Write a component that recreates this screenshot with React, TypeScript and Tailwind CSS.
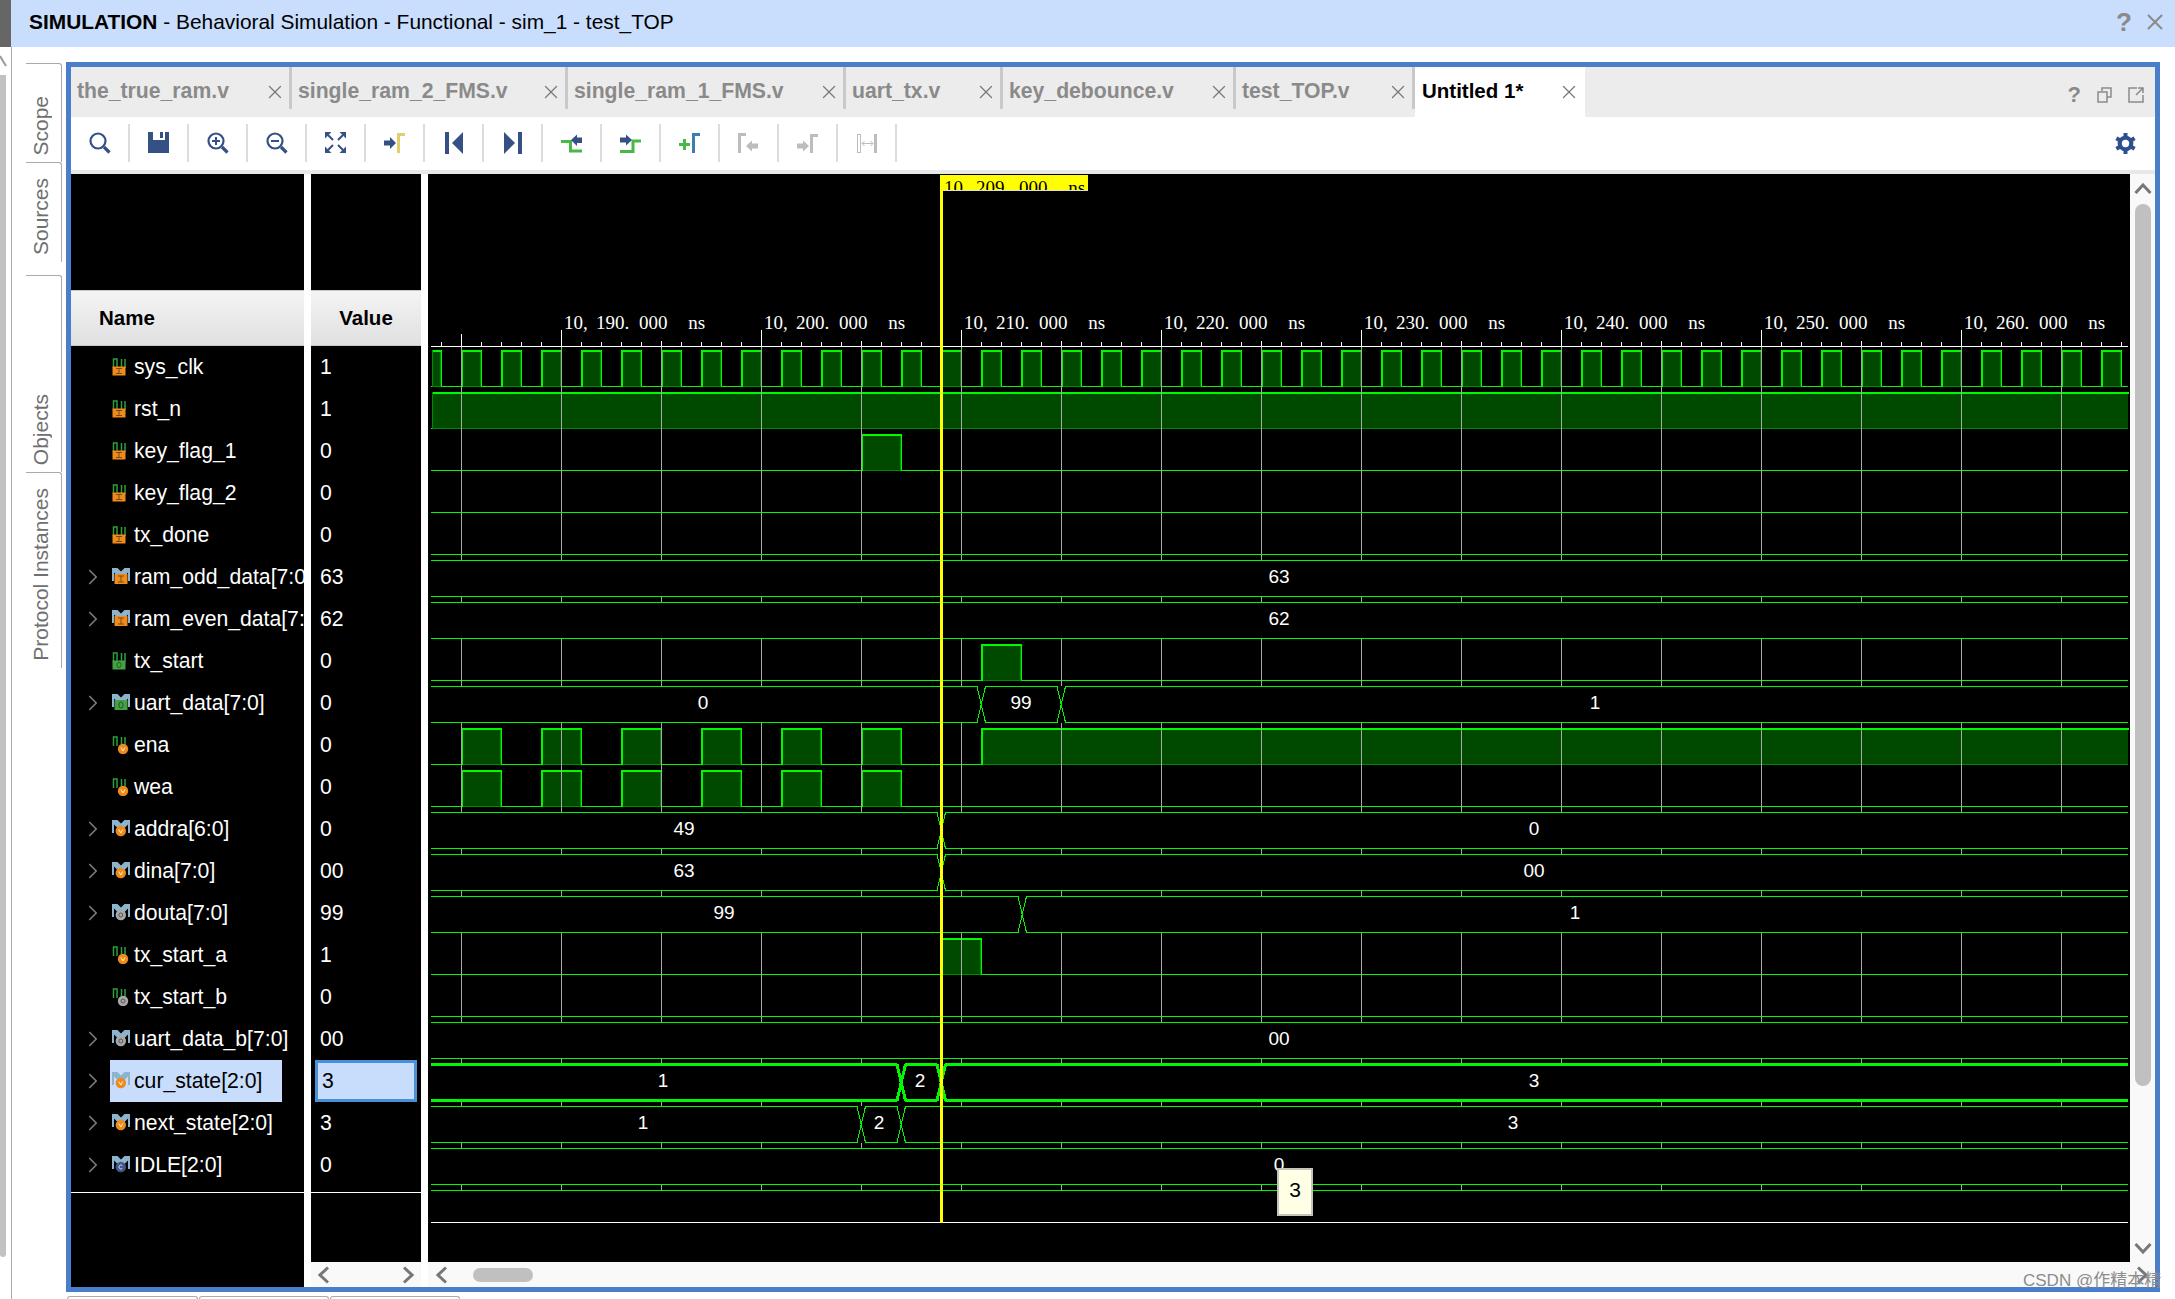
import { ChevronRight, X } from "lucide-react";
import type { ReactNode } from "react";

type Badge = "in" | "out" | "wire" | "gray" | "const";

const SIGNALS: { name: string; value: string; bus?: boolean; badge: Badge; selected?: boolean }[] = [
  { name: "sys_clk", value: "1", badge: "in" },
  { name: "rst_n", value: "1", badge: "in" },
  { name: "key_flag_1", value: "0", badge: "in" },
  { name: "key_flag_2", value: "0", badge: "in" },
  { name: "tx_done", value: "0", badge: "in" },
  { name: "ram_odd_data[7:0]", value: "63", bus: true, badge: "in" },
  { name: "ram_even_data[7:0]", value: "62", bus: true, badge: "in" },
  { name: "tx_start", value: "0", badge: "out" },
  { name: "uart_data[7:0]", value: "0", bus: true, badge: "out" },
  { name: "ena", value: "0", badge: "wire" },
  { name: "wea", value: "0", badge: "wire" },
  { name: "addra[6:0]", value: "0", bus: true, badge: "wire" },
  { name: "dina[7:0]", value: "00", bus: true, badge: "wire" },
  { name: "douta[7:0]", value: "99", bus: true, badge: "gray" },
  { name: "tx_start_a", value: "1", badge: "wire" },
  { name: "tx_start_b", value: "0", badge: "gray" },
  { name: "uart_data_b[7:0]", value: "00", bus: true, badge: "gray" },
  { name: "cur_state[2:0]", value: "3", bus: true, badge: "wire", selected: true },
  { name: "next_state[2:0]", value: "3", bus: true, badge: "wire" },
  { name: "IDLE[2:0]", value: "0", bus: true, badge: "const" },
];

const TABS = [
  { label: "the_true_ram.v", width: 221 },
  { label: "single_ram_2_FMS.v", width: 276 },
  { label: "single_ram_1_FMS.v", width: 278 },
  { label: "uart_tx.v", width: 157 },
  { label: "key_debounce.v", width: 233 },
  { label: "test_TOP.v", width: 179 },
];

const WAVE_START = 431;
const WAVE_END = 2128;
const GREEN = "#00f800";
const FILL = "#004a00";
const EDGE = "#008a00";

const top = (row: number) => 350 + 42 * row;

const clockHighs: [number, number][] = [[432, 441]];
for (let x = 461; x < WAVE_END; x += 40) clockHighs.push([x, x + 20]);

const enaHighs: [number, number][] = [];
for (let x = 461; x <= 861; x += 80) enaHighs.push([x, x + 40]);

const BITS: { row: number; highs: [number, number][] }[] = [
  { row: 0, highs: clockHighs },
  { row: 1, highs: [[432, WAVE_END]] },
  { row: 2, highs: [[861, 901]] },
  { row: 3, highs: [] },
  { row: 4, highs: [] },
  { row: 7, highs: [[981, 1021]] },
  { row: 9, highs: [...enaHighs, [981, WAVE_END]] },
  { row: 10, highs: enaHighs },
  { row: 14, highs: [[941, 981]] },
  { row: 15, highs: [] },
];

const BUSES: { row: number; edges: number[]; labels: [string, number][]; thick?: boolean }[] = [
  { row: 5, edges: [], labels: [["63", 1279]] },
  { row: 6, edges: [], labels: [["62", 1279]] },
  { row: 8, edges: [981, 1061], labels: [["0", 703], ["99", 1021], ["1", 1595]] },
  { row: 11, edges: [941], labels: [["49", 684], ["0", 1534]] },
  { row: 12, edges: [941], labels: [["63", 684], ["00", 1534]] },
  { row: 13, edges: [1022], labels: [["99", 724], ["1", 1575]] },
  { row: 16, edges: [], labels: [["00", 1279]] },
  { row: 17, edges: [901, 941], labels: [["1", 663], ["2", 920], ["3", 1534]], thick: true },
  { row: 18, edges: [861, 901], labels: [["1", 643], ["2", 879], ["3", 1513]] },
  { row: 19, edges: [], labels: [["0", 1279]] },
];

const MAJOR: number[] = [];
for (let x = 461; x < WAVE_END; x += 100) MAJOR.push(x);

const TICKS: number[] = [];
for (let x = 441; x < WAVE_END; x += 20) TICKS.push(x);

const RULER = ["190", "200", "210", "220", "230", "240", "250", "260"];

function tickTop(x: number) {
  if (x === 461) return 334;
  if ((x - 561) % 200 === 0) return 330;
  if ((x - 661) % 200 === 0) return 341;
  return 342;
}

function BitWave({ row, highs }: { row: number; highs: [number, number][] }) {
  const y = top(row);
  const lows: [number, number][] = [];
  let cursor = WAVE_START;
  for (const [a, b] of highs) {
    if (a > cursor) lows.push([cursor, a]);
    cursor = b;
  }
  if (cursor < WAVE_END) lows.push([cursor, WAVE_END]);
  return (
    <g>
      {highs.map(([a, b]) => (
        <g key={a}>
          <rect x={a} y={y} width={b - a} height={36} fill={FILL} />
          <rect x={a} y={y + 36} width={b - a} height={1} fill={EDGE} />
          <rect x={a} y={y} width={b - a + 1} height={2} fill={GREEN} />
          {a === 432 ? (
            <rect x={a} y={y} width={1} height={37} fill={EDGE} />
          ) : (
            <rect x={a} y={y} width={2} height={37} fill={GREEN} />
          )}
          {b < WAVE_END && <rect x={b} y={y} width={1} height={37} fill={GREEN} />}
          {b < WAVE_END && <rect x={b - 1} y={y + 2} width={1} height={34} fill={EDGE} />}
        </g>
      ))}
      {lows.map(([a, b]) => (
        <rect key={a} x={a} y={y + 36} width={b - a} height={1} fill={GREEN} />
      ))}
    </g>
  );
}

function BusWave({ row, edges, labels, thick }: { row: number; edges: number[]; labels: [string, number][]; thick?: boolean }) {
  const y = top(row);
  const h = thick ? 3 : 1;
  const off = thick ? -1 : 0;
  const stops = [WAVE_START - 4, ...edges, WAVE_END + 4];
  return (
    <g>
      <rect x={WAVE_START} y={y} width={WAVE_END - WAVE_START} height={37} fill="#000" />
      {stops.slice(0, -1).map((a, i) => {
        const b = stops[i + 1];
        return (
          <g key={a}>
            <rect x={a + 4} y={y + off} width={b - a - 8} height={h} fill={GREEN} />
            <rect x={a + 4} y={y + 36 + off} width={b - a - 8} height={h} fill={GREEN} />
          </g>
        );
      })}
      {edges.map((x) => (
        <path
          key={x}
          d={`M${x - 4} ${y + 0.5}L${x + 4.5} ${y + 36.5}M${x + 4.5} ${y + 0.5}L${x - 4} ${y + 36.5}`}
          stroke={GREEN}
          strokeWidth={thick ? 3 : 1}
          fill="none"
        />
      ))}
      {labels.map(([text, cx]) => (
        <text key={text + cx} x={cx} y={y + 23} textAnchor="middle" className="fill-white text-[19px]">
          {text}
        </text>
      ))}
    </g>
  );
}

// ruler labels: wide gaps around the separators, as the simulator's font draws them
function RulerText({ x, y, t, className }: { x?: number; y: number; t: string; className: string }) {
  return (
    <text x={x} y={y} className={`font-['Liberation_Serif',serif] text-[19px] ${className}`}>
      10,{" "}
      <tspan dx={3.5}>{t}. </tspan>
      <tspan dx={5}>000 </tspan>
      <tspan dx={16}>ns</tspan>
    </text>
  );
}

function Waveform() {
  return (
    <svg viewBox="428 174 1702 1088" className="block h-[1088px] w-[1702px] bg-black" shapeRendering="crispEdges">
      {BITS.map((b) => (
        <BitWave key={b.row} row={b.row} highs={b.highs} />
      ))}
      {MAJOR.map((x) => (
        <rect key={x} x={x} y={347} width={1} height={843} fill="#a9a9a9" />
      ))}
      {BUSES.map((b) => (
        <BusWave key={b.row} row={b.row} edges={b.edges} labels={b.labels} thick={b.thick} />
      ))}
      {BITS.map((b) =>
        b.highs.length === 0 ? <rect key={b.row} x={WAVE_START} y={top(b.row) + 36} width={WAVE_END - WAVE_START} height={1} fill={GREEN} /> : null,
      )}
      <rect x={WAVE_START} y={1190} width={WAVE_END - WAVE_START} height={1} fill={GREEN} />

      <rect x={WAVE_START} y={346} width={WAVE_END - WAVE_START} height={1} fill="#fff" />
      {TICKS.map((x) => (
        <rect key={x} x={x} y={tickTop(x)} width={1} height={346 - tickTop(x)} fill="#fff" />
      ))}
      {RULER.map((t, i) => (
        <RulerText key={t} x={564 + i * 200} y={329} t={t} className="fill-white" />
      ))}
      <rect x={WAVE_START} y={1222} width={WAVE_END - WAVE_START} height={1} fill="#fff" />

      <rect x={940} y={190} width={148} height={1} fill="#ddd" />
      <rect x={940} y={175} width={148} height={15} fill="#ffff00" />
      <svg x={944} y={175} width={144} height={15}>
        <RulerText x={0} y={19} t="209" className="fill-black" />
      </svg>
      <rect x={940} y={175} width={3} height={1048} fill="#ffff00" />
    </svg>
  );
}

function SignalIcon({ bus, badge }: { bus?: boolean; badge: Badge }) {
  const wave = bus ? (
    <path d="M0 0h5.500L9 3.500 12.500 0H18v13h-2V4.500L11 9.500H7L2 4.500V13H0z" fill="#8db4cc" />
  ) : (
    <path d="M1.500 10V1H5v9M9.500 10V1M13 10V1" stroke="#2e9e3e" strokeWidth="1.500" fill="none" />
  );
  let mark: ReactNode = null;
  const bx = bus ? 2.5 : 0.5;
  const by = bus ? 6 : 8.5;
  const bh = bus ? 10 : 9;
  if (badge === "in") {
    mark = (
      <>
        <rect x={bx} y={by} width="13" height={bh} fill="#ef8a1d" />
        <path d={`M${bx + 3.5} ${by + 2}h6M${bx + 6.5} ${by + 2}v${bh - 4}M${bx + 3.5} ${by + bh - 2}h6`} stroke="#7c4a10" strokeWidth="1" />
      </>
    );
  } else if (badge === "out") {
    mark = (
      <>
        <rect x={bx} y={by} width="13" height={bh} fill="#46a146" />
        <rect x={bx + 4.5} y={by + 2} width="4" height={bh - 4} rx="2" fill="none" stroke="#1d5f1d" strokeWidth="1" />
      </>
    );
  } else {
    const color = badge === "wire" ? "#ef8a1d" : badge === "gray" ? "#a8a8a8" : "#41588c";
    const inner = badge === "wire" ? "#fff2c8" : badge === "gray" ? "#555" : "#cfd8ee";
    const cx = bus ? 8.8 : 11;
    const cy = bus ? 11 : 13;
    mark = (
      <>
        <circle cx={cx} cy={cy} r="5.200" fill={color} />
        {badge === "wire" && <path d={`M${cx - 2} ${cy - 1.5}l2 3.500 2-3.500`} stroke={inner} strokeWidth="1" fill="none" />}
        {badge === "gray" && <circle cx={cx} cy={cy} r="2" fill="none" stroke={inner} strokeWidth="1" />}
        {badge === "const" && <path d={`M${cx + 1.5} ${cy - 1.5}a2 2 0 1 0 0 3`} stroke={inner} strokeWidth="1" fill="none" />}
      </>
    );
  }
  return (
    <svg viewBox="0 0 18 18" className="h-[18px] w-[18px] shrink-0">
      {wave}
      {mark}
    </svg>
  );
}

function NameRow({ name, bus, badge, selected }: { name: string; bus?: boolean; badge: Badge; selected?: boolean }) {
  return (
    <div className="flex h-[42px] items-center pl-[9px]">
      <div className="flex w-[26px] shrink-0 justify-center">
        {bus && <ChevronRight size={26} strokeWidth={1.6} className="text-[#7a7a7a]" />}
      </div>
      <div
        className={
          selected
            ? "ml-[4px] flex h-[42px] w-[172px] items-center gap-[4px] overflow-hidden bg-[#c8dcfb] pl-[2px] text-black"
            : "ml-[4px] flex h-[42px] min-w-0 flex-1 items-center gap-[4px] overflow-hidden pl-[2px] text-white"
        }
      >
        <SignalIcon bus={bus} badge={badge} />
        <span className="pb-[1px] text-[21.200px] whitespace-nowrap">{name}</span>
      </div>
    </div>
  );
}

function ValueRow({ value, selected }: { value: string; selected?: boolean }) {
  if (selected) {
    return (
      <div className="ml-[4px] flex h-[42px] w-[102px] items-center border-[3px] border-[#4a90d9] bg-[#c8dcfb] pb-[1px] pl-[4px] text-[21.200px] text-black">
        {value}
      </div>
    );
  }
  return <div className="flex h-[42px] items-center pb-[1px] pl-[9px] text-[21.200px] text-white">{value}</div>;
}

function Caret({ dir }: { dir: "left" | "right" | "up" | "down" }) {
  if (dir === "up" || dir === "down") {
    return (
      <svg viewBox="0 0 18 11" className="h-[11px] w-[18px] shrink-0">
        <path d={dir === "up" ? "M1.500 10L9 2l7.500 8" : "M1.500 1L9 9l7.500-8"} stroke="#777" strokeWidth="3" fill="none" />
      </svg>
    );
  }
  return (
    <svg viewBox="0 0 11 18" className="h-[18px] w-[11px] shrink-0">
      <path d={dir === "left" ? "M10 1.500L2 9l8 7.500" : "M1 1.500L9 9l-8 7.500"} stroke="#777" strokeWidth="3" fill="none" />
    </svg>
  );
}

function SideTab({ label, className }: { label: string; className: string }) {
  return (
    <div className={`flex w-[36px] flex-col items-center justify-end rounded-tr-[3px] border-t border-r border-[#aaaaaa] pr-[7px] ${className}`}>
      <span className="rotate-180 text-[21px] leading-none whitespace-nowrap text-[#707070] [writing-mode:vertical-rl]">{label}</span>
    </div>
  );
}

const NAVY = "#345084";
const GREY = "#bdbdbd";

function ToolIcon({ children }: { children: ReactNode }) {
  return (
    <div className="flex h-[38px] w-[59px] shrink-0 items-center justify-center border-r-2 border-[#dcdcdc]">
      <svg viewBox="0 0 22 22" className="h-[22px] w-[22px]">
        {children}
      </svg>
    </div>
  );
}

function Lens({ sign }: { sign?: "plus" | "minus" }) {
  return (
    <g fill="none" stroke={NAVY}>
      <circle cx="9" cy="9" r="7.500" strokeWidth="2.200" />
      <path d="M15 15l5.500 5.500" strokeWidth="3.200" />
      {sign && <path d="M5 9h8" strokeWidth="2" />}
      {sign === "plus" && <path d="M9 5v8" strokeWidth="2" />}
    </g>
  );
}

function Toolbar() {
  return (
    <div className="flex h-[53px] items-start bg-white pt-[7px]">
      <ToolIcon>
        <Lens />
      </ToolIcon>
      <ToolIcon>
        <path d="M0 0h5v8h12V0h1v0h3v21H0z" fill={NAVY} />
        <rect x="12" y="0" width="3" height="6" fill={NAVY} />
      </ToolIcon>
      <ToolIcon>
        <Lens sign="plus" />
      </ToolIcon>
      <ToolIcon>
        <Lens sign="minus" />
      </ToolIcon>
      <ToolIcon>
        <g fill={NAVY}>
          <path d="M0 0h6.500L0 6.500z" />
          <path d="M21 0v6.500L14.500 0z" />
          <path d="M0 21v-6.500L6.500 21z" />
          <path d="M21 21h-6.500L21 14.500z" />
        </g>
        <path d="M3 3l5 5M18 3l-5 5M3 18l5-5M18 18l-5-5" stroke={NAVY} strokeWidth="2" />
      </ToolIcon>
      <ToolIcon>
        <path d="M0 8.500h6V5l6 6-6 6v-3.500H0z" fill={NAVY} />
        <path d="M13 1h8v3h-5v17h-3z" fill="#e0cf6b" />
      </ToolIcon>
      <ToolIcon>
        <rect x="2" y="0" width="4" height="22" fill={NAVY} />
        <path d="M20 0v22L9 11z" fill={NAVY} />
      </ToolIcon>
      <ToolIcon>
        <rect x="16" y="0" width="4" height="22" fill={NAVY} />
        <path d="M2 0v22l11-11z" fill={NAVY} />
      </ToolIcon>
      <ToolIcon>
        <path d="M0 9.500h9.500V19H21" stroke="#46b946" strokeWidth="3" fill="none" />
        <path d="M10 8l6-5.500v3h5v5.500h-5v3z" fill={NAVY} />
      </ToolIcon>
      <ToolIcon>
        <path d="M0 19.500h13V9h8" stroke="#46b946" strokeWidth="3" fill="none" />
        <path d="M0 5.500h6v-3L12 8l-6 5.500v-3H0z" fill={NAVY} />
      </ToolIcon>
      <ToolIcon>
        <path d="M0 12.500h11M5.500 7v11" stroke="#46b946" strokeWidth="3" fill="none" />
        <path d="M13 1h8v3h-5v17h-3z" fill="#3b7fb0" />
      </ToolIcon>
      <ToolIcon>
        <path d="M0 1h8v3H3v17H0z" fill={GREY} />
        <path d="M8 14l6-5.500v3h6v5h-6v3z" fill={GREY} />
      </ToolIcon>
      <ToolIcon>
        <path d="M0 11.500h6v-3l6 5.500-6 5.500v-3H0z" fill={GREY} />
        <path d="M13 2h8v3h-5v16h-3z" fill={GREY} />
      </ToolIcon>
      <ToolIcon>
        <rect x="1.500" y="2.500" width="3" height="18" fill="none" stroke={GREY} />
        <rect x="18" y="2" width="3" height="19" fill={GREY} />
        <path d="M6 11.500h11M8.500 9l-2.500 2.500 2.500 2.500M14.500 9l2.500 2.500-2.500 2.500" stroke={GREY} fill="none" />
      </ToolIcon>
      <div className="ml-auto flex h-[38px] items-center pr-[19px]">
        <svg viewBox="0 0 20 20" className="h-[21px] w-[21px]">
          <circle cx="10" cy="10" r="5.500" fill="none" stroke="#2f4f8f" strokeWidth="4" />
          <path d="M10 0v4M10 16v4M1.300 5l3.500 2M15.200 13l3.500 2M1.300 15l3.500-2M15.200 7l3.500-2" stroke="#2f4f8f" strokeWidth="3.800" />
        </svg>
      </div>
    </div>
  );
}

function TabBar() {
  return (
    <div className="flex h-[50px] bg-[#ececec]">
      {TABS.map((t) => (
        <div key={t.label} className="flex shrink-0" style={{ width: t.width }}>
          <div className="flex h-[50px] flex-1 items-center justify-between pr-[3px] pl-[6px]">
            <span className="pb-[2px] text-[21.200px] font-bold whitespace-nowrap text-[#8a8a8a]">{t.label}</span>
            <X size={22} strokeWidth={1.4} className="text-[#7a7a7a]" />
          </div>
          <div className="h-[42px] w-[3px] bg-[#c9c9c9]" />
        </div>
      ))}
      <div className="flex h-[50px] w-[170px] shrink-0 items-center justify-between bg-white pr-[5px] pl-[7px]">
        <span className="pb-[2px] text-[20.500px] font-bold whitespace-nowrap text-black">Untitled 1*</span>
        <X size={22} strokeWidth={1.4} className="text-[#7a7a7a]" />
      </div>
      <div className="ml-auto flex h-[50px] items-center gap-[16px] pt-[5px] pr-[11px] text-[#8a8a8a]">
        <span className="text-[22px] leading-none font-bold">?</span>
        <svg viewBox="0 0 15 16" className="h-[16px] w-[15px]" fill="none" stroke="currentColor" strokeWidth="1.500">
          <path d="M5 4V1h9v9h-4M1 5h9v10H1z" />
        </svg>
        <svg viewBox="0 0 16 16" className="h-[16px] w-[16px]" fill="none" stroke="currentColor" strokeWidth="1.500">
          <path d="M9 1H1v14h14V8M8 8l7-7M10 1h5v5" />
        </svg>
      </div>
    </div>
  );
}

function HeaderCell({ children, className }: { children: ReactNode; className: string }) {
  return (
    <div className={`flex h-[56px] items-center border-y border-[#c8c8c8] bg-gradient-to-b from-[#f4f4f4] to-[#e0e0e2] text-[20.500px] font-bold text-black ${className}`}>
      {children}
    </div>
  );
}

export default function App() {
  return (
    <div className="relative h-[1299px] w-[2175px] overflow-hidden bg-white font-['Liberation_Sans','Noto_Sans_CJK_SC',sans-serif]">
      <div className="flex h-[47px]">
        <div className="w-[11px] bg-[#666666]" />
        <div className="flex flex-1 items-center justify-between bg-[#c9ddfd] pr-[7px] pl-[18px]">
          <div className="pb-[3px] text-[20.900px] text-black">
            <span className="font-bold">SIMULATION</span> - Behavioral Simulation - Functional - sim_1 - test_TOP
          </div>
          <div className="flex items-center gap-[10px] pb-[3px] text-[#8a8a8a]">
            <span className="text-[26px] leading-none font-bold">?</span>
            <X size={26} strokeWidth={1.8} />
          </div>
        </div>
      </div>

      <div className="flex">
        <div className="flex h-[1252px] w-[66px] shrink-0">
          <div className="flex w-[12px] shrink-0 flex-col border-r border-[#aaaaaa]">
            <svg viewBox="0 0 7 12" className="mt-[8px] h-[12px] w-[7px]">
              <path d="M0 1l6 10" stroke="#9a9a9a" strokeWidth="2" fill="none" />
            </svg>
            <div className="mt-[8px] h-[1182px] w-[6px] rounded-b-[4px] bg-[#c2c2c2]" />
          </div>
          <div className="ml-[14px] flex flex-col pt-[16px]">
            <SideTab label="Scope" className="h-[99px] pb-[6px]" />
            <SideTab label="Sources" className="h-[100px] pb-[7px]" />
            <div className="h-[13px]" />
            <SideTab label="Objects" className="h-[197px] pb-[7px]" />
            <SideTab label="Protocol Instances" className="h-[196px] pb-[7px]" />
          </div>
        </div>

        <div className="w-[2094px] shrink-0 pt-[15px]">
          <div className="h-[1230px] border-[5px] border-[#4a7ecb]">
            <TabBar />
            <Toolbar />
            <div className="h-[4px] bg-[#e8e8e8]" />

            <div className="flex h-[1113px]">
              <div className="w-[233px] shrink-0 bg-black">
                <div className="h-[116px]" />
                <HeaderCell className="pl-[28px]">Name</HeaderCell>
                {SIGNALS.map((s) => (
                  <NameRow key={s.name} name={s.name} bus={s.bus} badge={s.badge} selected={s.selected} />
                ))}
                <div className="mt-[6px] h-px bg-white" />
              </div>

              <div className="w-[7px] shrink-0 bg-white" />

              <div className="flex w-[110px] shrink-0 flex-col">
                <div className="flex-1 bg-black">
                  <div className="h-[116px]" />
                  <HeaderCell className="justify-center">Value</HeaderCell>
                  {SIGNALS.map((s) => (
                    <ValueRow key={s.name} value={s.value} selected={s.selected} />
                  ))}
                  <div className="mt-[6px] h-px bg-white" />
                </div>
                <div className="flex h-[25px] items-center justify-between bg-[#f9f9f9] px-[7px]">
                  <Caret dir="left" />
                  <Caret dir="right" />
                </div>
              </div>

              <div className="w-[7px] shrink-0 bg-white" />

              <div className="relative flex min-w-0 flex-1 flex-col">
                <div className="flex">
                  <Waveform />
                  <div className="flex h-[1088px] w-[25px] flex-col items-center bg-[#f9f9f9] pt-[9px] pb-[8px]">
                    <Caret dir="up" />
                    <div className="mt-[10px] h-[882px] w-[16px] rounded-full bg-[#c0c0c0]" />
                    <div className="flex-1" />
                    <Caret dir="down" />
                  </div>
                </div>
                <div className="flex h-[25px] items-center bg-[#f9f9f9] pr-[7px] pl-[8px]">
                  <Caret dir="left" />
                  <div className="ml-[26px] h-[14px] w-[60px] rounded-full bg-[#c0c0c0]" />
                  <div className="flex-1" />
                  <Caret dir="right" />
                </div>

                <div className="absolute top-[994px] left-[849px] flex h-[48px] w-[36px] items-center justify-center border-2 border-[#c4c4bc] bg-[#ffffe6] pb-[5px] text-[21px] text-black">
                  3
                </div>
              </div>
            </div>
          </div>
          <div className="mt-[4px] flex gap-px pl-[1px]">
            <div className="h-[4px] w-[131px] rounded-t-[3px] border-t border-r border-l border-[#aaaaaa]" />
            <div className="h-[4px] w-[130px] rounded-t-[3px] border-t border-r border-l border-[#aaaaaa]" />
            <div className="h-[4px] w-[130px] rounded-t-[3px] border-t border-r border-l border-[#aaaaaa]" />
          </div>
        </div>
      </div>

      <div className="absolute top-[1271px] left-[2023px] text-[17px] leading-[20px] whitespace-nowrap text-[#8c8c8c]">CSDN @作精本精</div>
    </div>
  );
}
